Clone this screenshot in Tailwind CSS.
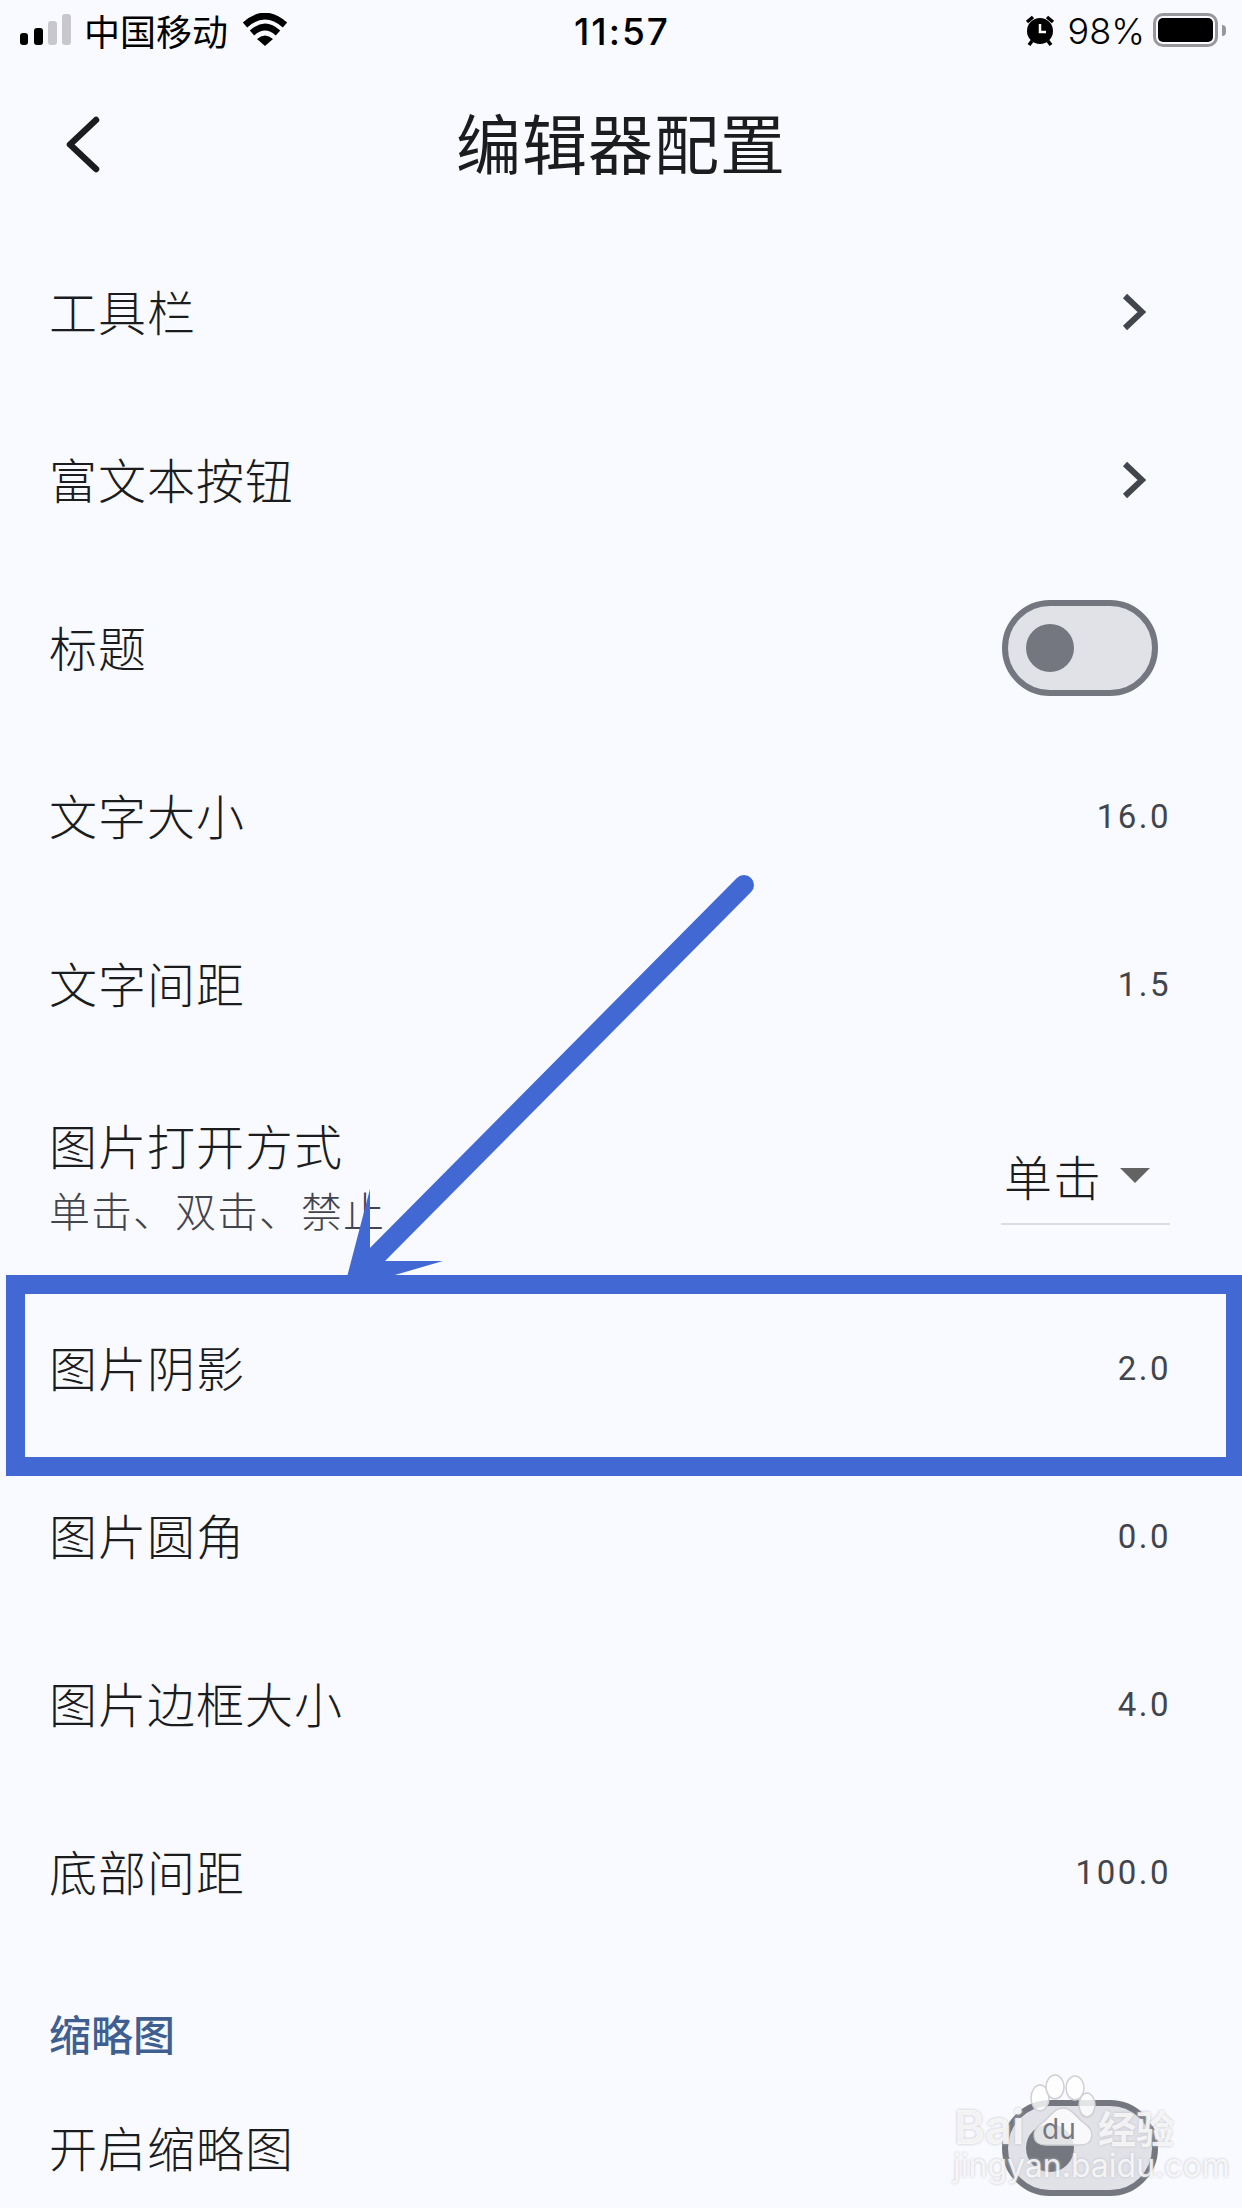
<!DOCTYPE html>
<html lang="zh">
<head>
<meta charset="utf-8">
<script src="https://cdn.jsdelivr.net/npm/@tailwindcss/browser@4"></script>
<title>编辑器配置</title>
</head>
<body class="bg-[#f9faff]">
<div class="relative w-[1242px] h-[2208px] overflow-hidden bg-[#f9faff] text-[#1a1c1e] font-['Noto_Sans_CJK_SC','Noto_Sans',sans-serif]">

  <!-- status bar -->
  <div class="grid grid-cols-3 items-center h-[60px] text-black">
    <div class="flex items-center pl-[20px]">
      <svg width="52" height="32" viewBox="0 0 52 32"><rect x="0" y="19" width="8" height="12" rx="3" fill="#000"/><rect x="14" y="14" width="9" height="17" rx="3" fill="#000"/><rect x="28" y="7" width="9" height="24" rx="3" fill="#c8c8cc"/><rect x="42" y="0" width="9" height="31" rx="3" fill="#c8c8cc"/></svg>
      <span class="ml-[12px] text-[36px] leading-[40px] font-normal">中国移动</span>
      <svg width="46" height="34" viewBox="0 0 46 34" class="ml-[14px]"><path d="M3 12 Q23 -6 43 12" fill="none" stroke="#000" stroke-width="6.5"/><path d="M10 20 Q23 8 36 20" fill="none" stroke="#000" stroke-width="6.5"/><path d="M15 26 Q23 19 31 26 L23 33 Z" fill="#000"/></svg>
    </div>
    <div class="text-center text-[37px] leading-[40px] tracking-[2px] font-medium mt-[3px] ml-[2px] font-['Inter',sans-serif]">11:57</div>
    <div class="flex items-center justify-end pr-[16px]">
      <svg width="32" height="32" viewBox="0 0 32 32"><circle cx="16" cy="17" r="13" fill="#000"/><path d="M16 10 V18 H22" fill="none" stroke="#fff" stroke-width="2.5"/><path d="M3 8 L9 3 M29 8 L23 3 M8 27 L5 31 M24 27 L27 31" stroke="#000" stroke-width="3.5"/></svg>
      <span class="ml-[12px] text-[36px] leading-[40px] mt-[2px] font-light font-['Inter',sans-serif]">98%</span>
      <span class="ml-[8px] block w-[65px] h-[34px] rounded-[10px] border-[3px] border-[#98989c] p-[2px]"><span class="block h-full w-full rounded-[5px] bg-black"></span></span>
      <span class="ml-[4px] block w-[4px] h-[11px] rounded-r-[4px] bg-[#98989c]"></span>
    </div>
  </div>

  <!-- app bar -->
  <div class="relative flex items-center justify-center h-[168px]">
    <svg width="44" height="64" viewBox="0 0 44 64" class="absolute left-[61px] top-[52px]"><path d="M35 8 L9 32.5 L35 57" fill="none" stroke="#1a1c1e" stroke-width="6.5" stroke-linecap="round" stroke-linejoin="round"/></svg>
    <h1 class="text-[65px] leading-[80px] font-normal tracking-[1px] -mt-[6px]">编辑器配置</h1>
  </div>

  <!-- list -->
  <div class="text-[48px] leading-[60px] tracking-[1px] font-light">
    <div class="flex items-center justify-between h-[168px] pl-[49px] pr-[96px]"><span class="pb-[4px]">工具栏</span>
      <svg width="24" height="38" viewBox="0 0 24 38"><path d="M3 3 L20 19 L3 35" fill="none" stroke="#43454c" stroke-width="6"/></svg></div>
    <div class="flex items-center justify-between h-[168px] pl-[49px] pr-[96px]"><span class="pb-[4px]">富文本按钮</span>
      <svg width="24" height="38" viewBox="0 0 24 38"><path d="M3 3 L20 19 L3 35" fill="none" stroke="#43454c" stroke-width="6"/></svg></div>
    <div class="flex items-center justify-between h-[168px] pl-[49px] pr-[84px]"><span class="pb-[4px]">标题</span>
      <span class="flex items-center w-[156px] h-[96px] rounded-full border-[6px] border-[#74777f] bg-[#e1e2e8] pl-[18px]"><span class="block w-[48px] h-[48px] rounded-full bg-[#74777f]"></span></span></div>
    <div class="flex items-center justify-between h-[168px] pl-[49px] pr-[71px]"><span class="pb-[4px]">文字大小</span><span class="text-[33px] tracking-[2.5px] font-normal text-[#43454c] pt-[2px] font-['Roboto',sans-serif]">16.0</span></div>
    <div class="flex items-center justify-between h-[168px] pl-[49px] pr-[71px]"><span class="pb-[4px]">文字间距</span><span class="text-[33px] tracking-[2.5px] font-normal text-[#43454c] pt-[2px] font-['Roboto',sans-serif]">1.5</span></div>
    <div class="flex items-center justify-between h-[216px] pl-[49px] pr-[72px]">
      <div class="flex flex-col mt-[6px]">
        <span class="leading-[60px]">图片打开方式</span>
        <span class="text-[41px] leading-[70px] tracking-[1px] text-[#43454c]">单击、双击、禁止</span>
      </div>
      <div class="flex items-center justify-between w-[169px] h-[92px] pl-[3px] pr-[20px] pb-[5px] border-b-[2px] border-[#dcdde3] mt-[5px]"><span>单击</span><span class="block w-0 h-0 border-x-[15px] border-x-transparent border-t-[15px] border-t-[#636363]"></span></div>
    </div>
    <div class="flex items-center justify-between h-[168px] pl-[49px] pr-[71px]"><span class="pb-[4px]">图片阴影</span><span class="text-[33px] tracking-[2.5px] font-normal text-[#43454c] pt-[2px] font-['Roboto',sans-serif]">2.0</span></div>
    <div class="flex items-center justify-between h-[168px] pl-[49px] pr-[71px]"><span class="pb-[4px]">图片圆角</span><span class="text-[33px] tracking-[2.5px] font-normal text-[#43454c] pt-[2px] font-['Roboto',sans-serif]">0.0</span></div>
    <div class="flex items-center justify-between h-[168px] pl-[49px] pr-[71px]"><span class="pb-[4px]">图片边框大小</span><span class="text-[33px] tracking-[2.5px] font-normal text-[#43454c] pt-[2px] font-['Roboto',sans-serif]">4.0</span></div>
    <div class="flex items-center justify-between h-[168px] pl-[49px] pr-[71px]"><span class="pb-[4px]">底部间距</span><span class="text-[33px] tracking-[2.5px] font-normal text-[#43454c] pt-[2px] font-['Roboto',sans-serif]">100.0</span></div>
    <div class="flex items-center h-[108px] pl-[49px] pt-[46px] text-[42px] tracking-[0px] font-medium text-[#3f5f90]">缩略图</div>
    <div class="flex items-center justify-between h-[168px] pl-[49px] pr-[84px]"><span class="pb-[4px]">开启缩略图</span>
      <span class="flex items-center w-[156px] h-[96px] rounded-full border-[6px] border-[#74777f] bg-[#e1e2e8] pl-[18px]"><span class="block w-[48px] h-[48px] rounded-full bg-[#74777f]"></span></span></div>
  </div>

  <!-- annotation: highlight box -->
  <div class="absolute left-[6px] top-[1275px] w-[1239px] h-[201px] border-[19px] border-[#4269d3] pointer-events-none"></div>
  <!-- annotation: arrow -->
  <svg class="absolute left-0 top-0 pointer-events-none" width="1242" height="1400" viewBox="0 0 1242 1400"><line x1="744" y1="885" x2="372" y2="1260" stroke="#4269d3" stroke-width="20" stroke-linecap="round"/><polygon points="370,1189 347,1277 388,1277 443,1261 385,1261 370,1248" fill="#4269d3"/></svg>

  <!-- watermark -->
  <div class="absolute left-[950px] top-[2090px] w-[230px] h-[100px] text-white/80 [text-shadow:0_0_3px_#bcbcc2]">
    <span class="absolute left-[4px] top-[7px] text-[47px] leading-[60px] font-semibold font-['Inter',sans-serif]">Bai</span>
    <svg class="absolute left-[80px] -top-[15px] overflow-visible" width="64" height="70" viewBox="0 0 64 70"><g fill="#fff" fill-opacity=".8" stroke="#cfcfd4" stroke-width="1.5"><ellipse cx="10" cy="23" rx="9" ry="13"/><ellipse cx="25" cy="12" rx="9" ry="12"/><ellipse cx="45" cy="13" rx="9" ry="12"/><ellipse cx="57" cy="30" rx="8" ry="12"/><path d="M33 33 C24 33 20 42 12 48 C0 56 2 70 16 70 L50 70 C64 70 66 56 54 48 C46 42 42 33 33 33Z"/></g></svg>
    <span class="absolute left-[92px] top-[24px] text-[28px] leading-[30px] font-normal text-[#74777f] [text-shadow:none] font-['Inter',sans-serif]">du</span>
    <span class="absolute left-[148px] top-[12px] text-[38px] leading-[50px] font-bold">经验</span>
    <span class="absolute left-[3px] top-[56px] text-[32px] leading-[40px] font-normal whitespace-nowrap font-['Inter',sans-serif]">jingyan.baidu.com</span>
  </div>
</div>
</body>
</html>
